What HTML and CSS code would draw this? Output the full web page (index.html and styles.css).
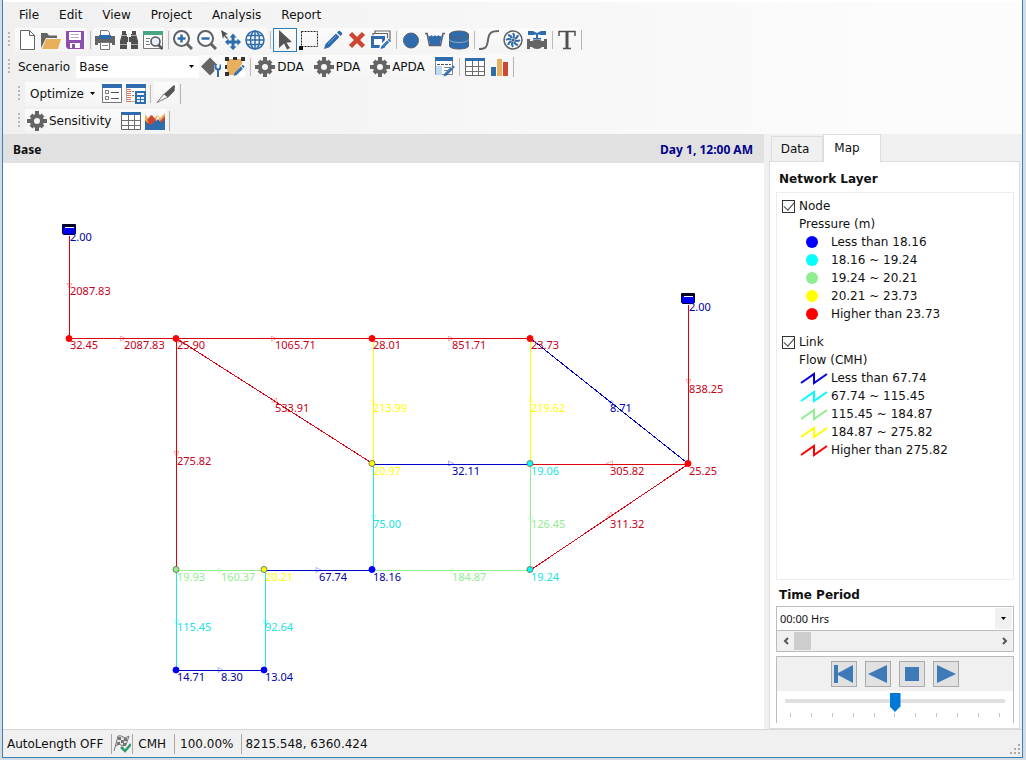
FILE: index.html
```html
<!DOCTYPE html>
<html lang="en">
<head>
<meta charset="utf-8">
<title>Network map</title>
<link rel="stylesheet" href="styles.css">
</head>
<body>
<svg class="defs" aria-hidden="true">
  <symbol id="gear" viewBox="0 0 20 20"><path d="M8 0h4v4H8zM8 16h4v4H8zM0 8h4v4H0zM16 8h4v4h-4zM2.500 5.500l3-3L8 5.500 5.500 8zM12 5.500l2.500-3 3 3L14.500 8zM2.500 14.500l3-2.500L8 14.500l-2.500 3zM12 14.500l2.500-2.500 3 2.500-3 3z" fill="#646464"/><circle cx="10" cy="10" r="5" fill="none" stroke="#646464" stroke-width="4"/></symbol>
  <symbol id="table" viewBox="0 0 20 20"><path d="M.500 1.500h19v17H.500z" fill="#fff" stroke="#646464"/><path d="M0 1h20v3H0z" fill="#2f6cad"/><path d="M1 9.500h18M1 14.500h18M7.500 4v14M13.500 4v14" stroke="#707070" fill="none"/></symbol>
  <symbol id="pencil" viewBox="0 0 20 20"><path d="M1 19l1.500-5L13 3.500 16.500 7 6 17.500zM14 2.500l1.500-1.500q1-.500 1.800.200l1.600 1.600q.700.800.200 1.700L17.500 6z" fill="#2f6cad"/><path d="M5 14l8-8" stroke="#7ba8d8" stroke-width=".8"/></symbol>
  <symbol id="zig" viewBox="0 0 28 14"><path d="M1 12 14 3v9L27 3" fill="none" stroke="currentColor" stroke-width="2"/></symbol>
</svg>
<div class="window">
  <nav class="menu">
    <button>File</button><button>Edit</button><button>View</button><button>Project</button><button>Analysis</button><button>Report</button>
  </nav>

  <div class="toolbar">
    <i class="grip"></i>
    <button class="tool" aria-label="New"><svg viewBox="0 0 20 20"><path d="M3.500.500h9l5 5v14h-14z" fill="#fff" stroke="#646464"/><path d="M12.500.500v5h5" fill="none" stroke="#646464"/></svg></button>
    <button class="tool" aria-label="Open"><svg viewBox="0 0 20 20"><path d="M0 18V3h6l2 2.500h8V8H5z" fill="#646464"/><path d="M5 9h15l-3 10H1z" fill="#e8b05c"/></svg></button>
    <button class="tool" aria-label="Save"><svg viewBox="0 0 20 20"><path d="M1 1h18v18H3l-2-2z" fill="#8c4fb0"/><path d="M4 2h12v8H4zM5 13h10v5H5z" fill="#fff"/><path d="M6 4.500h8M6 7.500h8" stroke="#c4a8d4"/><path d="M7 14h3v4H7z" fill="#8c4fb0"/></svg></button>
    <i class="sep"></i>
    <button class="tool" aria-label="Print"><svg viewBox="0 0 20 20"><path d="M0 6h20v9h-3v-2H3v2H0z" fill="#646464"/><path d="M5.500.500h7l2 2V6h-9z" fill="#fff" stroke="#777"/><path d="M4 5h12v4H4z" fill="#2f6cad"/><path d="M5.500 12.500h9v7h-9z" fill="#fff" stroke="#777"/><path d="M7 15.500h6" stroke="#888"/></svg></button>
    <button class="tool" aria-label="Find"><svg viewBox="0 0 20 20"><path d="M3 1h4v3h1v3h4V4h1V1h4v3l2 7v8h-7v-7H8v7H1v-8l2-7z" fill="#505050"/><path d="M3 5.500h5M12 5.500h5M1 14.500h7M12 14.500h7" stroke="#aaa"/><path d="M9.500 7v5" stroke="#ddd"/></svg></button>
    <button class="tool" aria-label="Preview report"><svg viewBox="0 0 20 20"><path d="M.500 1.500h19v17H.500z" fill="#fff" stroke="#777"/><path d="M0 1h20v4H0z" fill="#4aa582"/><path d="M3 8.500h4M3 11.500h3M3 14.500h4" stroke="#777"/><circle cx="12.500" cy="11.500" r="4.500" fill="#e8f0ff" stroke="#555" stroke-width="1.600"/><path d="M15.500 15l4 4" stroke="#555" stroke-width="2.500"/></svg></button>
    <i class="sep"></i>
    <button class="tool" aria-label="Zoom in"><svg viewBox="0 0 20 20"><path d="M14 14l5 5" stroke="#646464" stroke-width="3"/><circle cx="8.500" cy="8.500" r="7.500" fill="#fff" stroke="#5c6068" stroke-width="2"/><path d="M4.500 8.500h8M8.500 4.500v8" stroke="#2f6cad" stroke-width="2.500"/></svg></button>
    <button class="tool" aria-label="Zoom out"><svg viewBox="0 0 20 20"><path d="M14 14l5 5" stroke="#646464" stroke-width="3"/><circle cx="8.500" cy="8.500" r="7.500" fill="#fff" stroke="#5c6068" stroke-width="2"/><path d="M4.500 8.500h8" stroke="#2f6cad" stroke-width="2.500"/></svg></button>
    <button class="tool" aria-label="Pan"><svg viewBox="0 0 20 20"><path d="M0 0l7 4-3 1 3 3-1 1-3-3-1 3z" fill="#505050"/><path d="M12 3.500l3.500 4h-2v3h3v-2l3.500 3.500-3.500 3.500v-2h-3v3h2L12 20l-3.500-3.500h2v-3h-3v2L4 12l3.500-3.500v2h3v-3h-2z" fill="#2f6cad"/></svg></button>
    <button class="tool" aria-label="Full extent"><svg viewBox="0 0 20 20"><g fill="none" stroke="#2f6cad" stroke-width="1.500"><circle cx="10" cy="10" r="9"/><ellipse cx="10" cy="10" rx="4.500" ry="9"/><path d="M10 1v18M1 10h18M2.500 5.500h15M2.500 14.500h15"/></g></svg></button>
    <i class="sep"></i>
    <button class="tool active" aria-label="Select"><svg viewBox="0 0 20 20"><path d="M4 0l13 12-5.500.800L15 18l-3 1.500-3-6L4 18z" fill="#555"/></svg></button>
    <button class="tool" aria-label="Select region"><svg viewBox="0 0 20 20"><path d="M2.500 1.500h16v15h-16z" fill="none" stroke="#222" stroke-dasharray="2 1"/><path d="M0 16h4v4H0z" fill="#111"/></svg></button>
    <button class="tool" aria-label="Draw"><svg viewBox="0 0 20 20"><use href="#pencil"/></svg></button>
    <button class="tool" aria-label="Delete"><svg viewBox="0 0 20 20"><path d="M3.500 3.500l13 13M16.500 3.500l-13 13" stroke="#cf4630" stroke-width="4.500"/></svg></button>
    <button class="tool" aria-label="Edit group"><svg viewBox="0 0 20 20"><path d="M4 3.500V1h15v11M2 5.500V3.500h14.500v10" fill="none" stroke="#666" stroke-width="1.200"/><path d="M1.500 7.500h11v9h-11z" fill="#fff" stroke="#2f6cad" stroke-width="3"/><path d="M8 19l1-4 7-7 4 2-8 9z" fill="#fff"/><use href="#pencil" x="9" y="8" width="11" height="12"/></svg></button>
    <i class="sep"></i>
    <button class="tool" aria-label="Junction"><svg viewBox="0 0 20 20"><circle cx="10" cy="10.500" r="7.500" fill="#2f6cad" stroke="#5c6068"/></svg></button>
    <button class="tool" aria-label="Reservoir"><svg viewBox="0 0 20 20"><path d="M0 3.500h2l2.500 12h11l2.500-12h2" fill="none" stroke="#5c6068" stroke-width="1.500"/><path d="M3 5q1.700 2.500 3.500 0 1.800 2.500 3.500 0 1.800 2.500 3.500 0 1.800 2.500 3.500 0l-2.200 10H5z" fill="#2f6cad"/></svg></button>
    <button class="tool" aria-label="Tank"><svg viewBox="0 0 20 20"><path d="M.500 4v12c0 4 19 4 19 0V4z" fill="#2f6cad" stroke="#5c6068"/><ellipse cx="10" cy="4.500" rx="9.500" ry="3.500" fill="#2f6cad" stroke="#5c6068"/><path d="M0 9.500c2 4 18 4 20 0" fill="none" stroke="#9ab"/></svg></button>
    <i class="sep"></i>
    <button class="tool" aria-label="Pipe"><svg viewBox="0 0 20 20"><path d="M0 19c6 0 8-1 9-9s4-9 11-9" fill="none" stroke="#646464" stroke-width="2"/></svg></button>
    <button class="tool" aria-label="Pump"><svg viewBox="0 0 20 20"><circle cx="10" cy="10" r="9" fill="#fff" stroke="#5c6068" stroke-width="1.500"/><g fill="none" stroke="#2f6cad" stroke-width="2"><path id="blade" d="M10 8q2-2 0-5"/><use href="#blade" transform="rotate(45 10 10)"/><use href="#blade" transform="rotate(90 10 10)"/><use href="#blade" transform="rotate(135 10 10)"/><use href="#blade" transform="rotate(180 10 10)"/><use href="#blade" transform="rotate(225 10 10)"/><use href="#blade" transform="rotate(270 10 10)"/><use href="#blade" transform="rotate(315 10 10)"/></g><circle cx="10" cy="10" r="1.500" fill="#5c6068"/></svg></button>
    <button class="tool" aria-label="Valve"><svg viewBox="0 0 20 20"><path d="M1 1h5l4 2 4-2h5v4h-5l-3-.500V8h3v1.500H6V8h3V4.500L6 5H1z" fill="#2f6cad"/><path d="M0 9h3v2h2q1.500-1.500 5-1.500t5 1.500h2V9h3v10h-3v-2h-2q-1.500 2-5 2t-5-2H3v2H0z" fill="#646464"/></svg></button>
    <i class="sep"></i>
    <button class="tool" aria-label="Text"><svg viewBox="0 0 20 20"><path d="M2 6V1.500h16V6M6 18.500h8" fill="none" stroke="#505050" stroke-width="1.500"/><path d="M10 1v18" stroke="#505050" stroke-width="3"/></svg></button>
    <i class="end"></i>
  </div>

  <div class="toolbar">
    <i class="grip"></i>
    <label class="scenario-label" for="scenario">Scenario</label>
    <span class="combo scenario"><select id="scenario"><option>Base</option></select><svg viewBox="0 0 5 3"><path d="M0 0h5L2.500 3z"/></svg></span>
    <button class="tool" aria-label="Manage scenario"><svg viewBox="0 0 20 20"><path d="M0 9.500 9 0.500 18 9.500 9 18.500z" fill="#646464"/><path d="M13 8h7v12h-6z" fill="#f8f8f8"/><path d="M14.500 7.500v2q0 3 2.500 3t2.500-3v-2M17 12v8" stroke="#2f6cad" stroke-width="2" fill="none"/></svg></button>
    <button class="tool" aria-label="Edit area"><svg viewBox="0 0 20 20"><path d="M2.500 2h15l-1 8v8h-13l-2-8z" fill="#e8b05c"/><path d="M0 0h4v4H0zM8 0h4v3H8zM16 0h4v4h-4zM0 15h4v4H0zM0 8h2v4H0z" fill="#333"/><path d="M8 19l9-12 3 2v11z" fill="#fff"/><use href="#pencil" x="8" y="7" width="12" height="13"/></svg></button>
    <i class="sep"></i>
    <button class="tool labelled"><svg viewBox="0 0 20 20"><use href="#gear"/></svg>DDA</button>
    <button class="tool labelled"><svg viewBox="0 0 20 20"><use href="#gear"/></svg>PDA</button>
    <button class="tool labelled"><svg viewBox="0 0 20 20"><use href="#gear"/></svg>APDA</button>
    <button class="tool" aria-label="Edit report"><svg viewBox="0 0 20 20"><path d="M.500 1.500h17v16H.500z" fill="#fff" stroke="#888"/><path d="M0 0h18v4H0z" fill="#2f6cad"/><path d="M2 7.500h14" stroke="#555" stroke-dasharray="3 1"/><path d="M1 9h6v9H1z" fill="#bcdcf4"/><path d="M9 10.500h6M9 13.500h4" stroke="#888"/><use href="#pencil" x="8" y="8" width="12" height="12"/></svg></button>
    <i class="sep"></i>
    <button class="tool" aria-label="Table"><svg viewBox="0 0 20 20"><use href="#table"/></svg></button>
    <button class="tool" aria-label="Chart"><svg viewBox="0 0 20 20"><path d="M2 10h5v9H2z" fill="#2f6cad"/><path d="M8 2h5v17H8z" fill="#e8b05c"/><path d="M14 5h5v14h-5z" fill="#cf4630"/></svg></button>
    <i class="end"></i>
  </div>

  <div class="toolbar indented">
    <i class="grip"></i>
    <button class="tool dropdown">Optimize<svg class="arrow" viewBox="0 0 5 3"><path d="M0 0h5L2.500 3z"/></svg></button>
    <button class="tool" aria-label="Options"><svg viewBox="0 0 20 20"><path d="M.500.500h19v18H.500z" fill="#fff" stroke="#777"/><path d="M0 0h20v4H0z" fill="#2f6cad"/><path d="M3.500 6.500h3v3h-3zM3.500 12.500h3v3h-3z" fill="#fff" stroke="#777"/><path d="M9 8.500h8M9 14.500h8" stroke="#555"/></svg></button>
    <button class="tool" aria-label="Costs"><svg viewBox="0 0 20 20"><path d="M.500.500h19v17H.500z" fill="#fff" stroke="#aaa"/><path d="M0 0h20v4H0z" fill="#2f6cad"/><path d="M3 5v13" stroke="#dc7060" stroke-width="4" stroke-dasharray="1 1"/><path d="M6 7.500h2M6 11.500h2" stroke="#777"/><path d="M9 7h11v13H9z" fill="#2f6cad"/><path d="M11 9h7v2h-7zM11 13h3v2h-3zM15 13h3v2h-3zM11 16h3v2h-3zM15 16h3v2h-3z" fill="#e8f2fc"/></svg></button>
    <i class="sep"></i>
    <button class="tool" aria-label="Cut"><svg viewBox="0 0 20 20"><path d="M1 18.500 8 10l4 3z" fill="#fff" stroke="#777"/><path d="M8 10 18 1l1 1-.500 5-6.500 6.500z" fill="#555"/></svg></button>
    <i class="end"></i>
  </div>

  <div class="toolbar indented">
    <i class="grip"></i>
    <button class="tool labelled"><svg viewBox="0 0 20 20"><use href="#gear"/></svg>Sensitivity</button>
    <button class="tool" aria-label="Sensitivity table"><svg viewBox="0 0 20 20"><use href="#table"/></svg></button>
    <button class="tool" aria-label="Sensitivity chart"><svg viewBox="0 0 20 20"><path d="M0 3l5 7 8-6 2 3 5-5v14H0z" fill="#e8b05c"/><path d="M11 10 13 4l1 5z" fill="#fff"/><path d="M0 9l3 3 4-8 4 6 3 1 6-6v14H0z" fill="#cf4630"/><path d="M0 10l5 4 3-3 3-1 2-2 3 4 4-4v11H0z" fill="#2f6cad"/><path d="M2 9l4-5 5 5-5 5z" fill="#cf4630"/></svg></button>
    <i class="end"></i>
  </div>

  <main class="work">
    <section class="mapview">
      <header class="maphead"><span>Base</span><span class="clock">Day 1, 12:00 AM</span></header>
      <svg class="map" role="img" aria-label="Pipe network">
        <g transform="translate(-3 -163)">
          <g class="lines">
            <g class="red"><path d="M69.500 236V338.500H530.500M176.500 338.500V570M176.500 338.500 372.500 463.500M530.500 464.500H688.500V305M688.500 464 530.500 570"/></g>
            <g class="blue"><path d="M530.500 338.500 688.500 464M372.500 464.500H530.500M264.500 570.500H372.500M176.500 670.500H264.500"/></g>
            <g class="yellow"><path d="M373.500 338V464M530.500 338V464"/></g>
            <g class="cyan"><path d="M373.500 464V570M176.500 570V670M265.500 570V670"/></g>
            <g class="green"><path d="M530.500 464V570.500H372M176 570.500H264"/></g>
          </g>
          <g class="arrows">
            <path class="red" d="M67 283.500h5l-2.500 5zM120.500 336v5l5-2.500zM271.500 336v5l5-2.500zM448.500 336v5l5-2.500zM174 451.500h5l-2.500 5zM271.500 402l5-4 1 5zM686 379.500h5l-2.500 5zM612.500 461v5l-6-2.500zM607 517l4-5 1 5z"/>
            <path class="blue" d="M448.500 461v5l5-2.500zM316 567.500v5l5-2.500zM218 667.500v5l5-2.500zM608 401h5v5z"/>
            <path class="green" d="M218 568v5l5-2.500zM453 568v5l-5-2.500zM528 519h5l-2.500-5z"/>
            <path class="yellow" d="M371 400h5l-2.500 5zM528 401h5l-2.500-5z"/>
            <path class="cyan" d="M371 515h5l-2.500 5zM174 620h5l-2.500 5zM263 620h5l-2.500 5z"/>
          </g>
          <g class="tanks"><path d="M62.500 224.500h13v9l-1 1h-11l-1-1zM681.500 293.500h13v9l-1 1h-11l-1-1z"/><path class="rim" d="M63 225h12v2H63zM682 294h12v2h-12z"/><path class="surface" d="M65 227.500h9M684 296.500h9"/></g>
          <g class="nodes">
            <g class="red"><circle cx="69" cy="338.500" r="3"/><circle cx="176" cy="338.500" r="3"/><circle cx="372" cy="338.500" r="3"/><circle cx="530" cy="338.500" r="3"/><circle cx="688" cy="463.500" r="3"/></g>
            <g class="yellow"><circle cx="372" cy="463.500" r="3"/><circle cx="264" cy="569.500" r="3"/></g>
            <g class="cyan"><circle cx="530" cy="463.500" r="3"/><circle cx="530" cy="569.500" r="3"/></g>
            <g class="green"><circle cx="176" cy="569.500" r="3"/></g>
            <g class="blue"><circle cx="372" cy="569.500" r="3"/><circle cx="176" cy="670" r="3"/><circle cx="264" cy="670" r="3"/></g>
          </g>
          <g class="labels">
            <g class="blue"><text x="70" y="241">2.00</text><text x="689" y="311">2.00</text><text x="610" y="412">8.71</text><text x="452" y="475">32.11</text><text x="319" y="581">67.74</text><text x="373" y="581">18.16</text><text x="177" y="681">14.71</text><text x="221" y="681">8.30</text><text x="265" y="681">13.04</text></g>
            <g class="red"><text x="70" y="295">2087.83</text><text x="70" y="349">32.45</text><text x="124" y="349">2087.83</text><text x="177" y="349">25.90</text><text x="275" y="349">1065.71</text><text x="373" y="349">28.01</text><text x="452" y="349">851.71</text><text x="531" y="349">23.73</text><text x="275" y="412">533.91</text><text x="177" y="465">275.82</text><text x="689" y="393">838.25</text><text x="610" y="475">305.82</text><text x="689" y="475">25.25</text><text x="610" y="528">311.32</text></g>
            <g class="yellow"><text x="373" y="412">213.99</text><text x="531" y="412">219.62</text><text x="373" y="475">20.97</text><text x="265" y="581">20.21</text></g>
            <g class="cyan"><text x="531" y="475">19.06</text><text x="373" y="528">75.00</text><text x="531" y="581">19.24</text><text x="177" y="631">115.45</text><text x="265" y="631">92.64</text></g>
            <g class="green"><text x="531" y="528">126.45</text><text x="177" y="581">19.93</text><text x="221" y="581">160.37</text><text x="452" y="581">184.87</text></g>
          </g>
        </g>
      </svg>
    </section>

    <aside class="side">
      <div class="tabs"><button class="tab">Data</button><button class="tab current">Map</button></div>
      <div class="panel">
        <h2>Network Layer</h2>
        <div class="layers">
          <div class="layer">
            <label class="check"><input type="checkbox" checked>Node</label>
            <p>Pressure (m)</p>
            <ul>
              <li><i class="dot blue"></i>Less than 18.16</li>
              <li><i class="dot cyan"></i>18.16 ~ 19.24</li>
              <li><i class="dot green"></i>19.24 ~ 20.21</li>
              <li><i class="dot yellow"></i>20.21 ~ 23.73</li>
              <li><i class="dot red"></i>Higher than 23.73</li>
            </ul>
          </div>
          <div class="layer">
            <label class="check"><input type="checkbox" checked>Link</label>
            <p>Flow (CMH)</p>
            <ul>
              <li><svg class="zig blue"><use href="#zig"/></svg>Less than 67.74</li>
              <li><svg class="zig cyan"><use href="#zig"/></svg>67.74 ~ 115.45</li>
              <li><svg class="zig green"><use href="#zig"/></svg>115.45 ~ 184.87</li>
              <li><svg class="zig yellow"><use href="#zig"/></svg>184.87 ~ 275.82</li>
              <li><svg class="zig red"><use href="#zig"/></svg>Higher than 275.82</li>
            </ul>
          </div>
        </div>
        <h2 class="period-title"><label for="period">Time Period</label></h2>
        <span class="combo period"><select id="period"><option>00:00 Hrs</option></select><svg viewBox="0 0 5 3"><path d="M0 0h5L2.500 3z"/></svg></span>
        <div class="scroll">
          <button aria-label="Earlier"><svg viewBox="0 0 8 8"><path d="M6 1 3 4l3 3"/></svg></button>
          <i class="thumb"></i>
          <button aria-label="Later"><svg viewBox="0 0 8 8"><path d="M2 1l3 3-3 3"/></svg></button>
        </div>
        <div class="player">
          <div class="controls">
            <button aria-label="First"><svg viewBox="0 0 20 20"><path d="M0 1h4v8L19 1v18L4 11v8H0z"/></svg></button>
            <button aria-label="Back"><svg viewBox="0 0 20 20"><path d="M0 10 19 1v18z"/></svg></button>
            <button aria-label="Stop"><svg viewBox="0 0 20 20"><path d="M3 3h14v14H3z"/></svg></button>
            <button aria-label="Play"><svg viewBox="0 0 20 20"><path d="M1 1v18l19-9z"/></svg></button>
          </div>
          <input class="speed" type="range" min="0" max="10" value="5" aria-label="Speed">
          <div class="ticks"><i></i><i></i><i></i><i></i><i></i><i></i><i></i><i></i><i></i><i></i><i></i></div>
        </div>
      </div>
    </aside>
  </main>

  <footer class="status">
    <span>AutoLength OFF</span>
    <span class="flag"><svg viewBox="0 0 18 18"><path d="M1 16 5 1q3-1 5 1t6-1l-3 9q-3 2-5 0t-5 1" fill="#e4e4e4" stroke="#777"/><path d="M5 2h3v3H5zM11 3h3v3h-3zM8 5h3v3H8zM4 7h3v3H4zM10 8h3v3h-3z" fill="#777"/><path d="M8 12l4 4 6-7" fill="none" stroke="#2f9a6c" stroke-width="2.500"/></svg></span>
    <span>CMH</span>
    <span class="zoom">100.00%</span>
    <span class="coords">8215.548, 6360.424</span>
    <svg class="sizegrip" viewBox="0 0 10 10"><path d="M8 0h2v2H8zM4 4h2v2H4zM8 4h2v2H8zM0 8h2v2H0zM4 8h2v2H4zM8 8h2v2H8z"/></svg>
  </footer>
</div>
</body>
</html>
```
FILE: styles.css
```css
* { box-sizing: border-box; }
body {
  margin: 0;
  height: 100vh;
  padding: 0 3px 2px 2px;
  background: #d2dde8;
  font: 12px/18px "DejaVu Sans", Verdana, sans-serif;
  color: #111;
}
button, select, input { font: inherit; color: inherit; margin: 0; }
button { border: 0; padding: 0; background: none; }
svg { display: block; flex: none; }
h2, p, ul { margin: 0; padding: 0; }
.defs { position: absolute; width: 0; height: 0; }

.red { color: #f00; }
.blue { color: #00f; }
.cyan { color: #0ff; }
.green { color: #90ee90; }
.yellow { color: #ff0; }

.window {
  height: 100%;
  display: flex;
  flex-direction: column;
  border: solid #3d80b0;
  border-width: 0 1px 1px;
  background: linear-gradient(90deg, #f0f0f0, #fcfcfc 90%);
}

.menu {
  height: 26px;
  padding: 1px 0 0 16px;
  border-top: 2px solid #fff;
  display: flex;
  align-items: center;
  gap: 20px;
}

.toolbar {
  height: 27px;
  padding-left: 5px;
  display: flex;
  align-self: flex-start;
  align-items: center;
}
.toolbar.indented { margin-left: 10px; }
.grip {
  width: 2px;
  height: 16px;
  margin-right: 5px;
  background: repeating-linear-gradient(#b8b8b8 0 2px, transparent 2px 4px);
}
.tool {
  width: 24px;
  height: 24px;
  display: flex;
  align-items: center;
  justify-content: center;
  background: linear-gradient(#fbfbfb, #f4f4f4);
}
.tool svg { width: 20px; height: 20px; }
.tool.active { border: 1px solid #2f7db8; }
.tool.labelled { width: auto; padding: 0 8px 0 2px; gap: 2px; }
.tool.dropdown { width: auto; padding: 0 5px; gap: 6px; }
.tool .arrow { width: 5px; height: 3px; }
.sep { width: 6px; height: 18px; background: linear-gradient(#bbb, #bbb) center / 1px 100% no-repeat; }
.end { width: 3px; height: 20px; border-right: 1px solid #b4b4b4; }
.scenario-label { margin: 0 6px 0 3px; }

.combo { display: grid; align-items: center; }
.combo > * { grid-area: 1 / 1; }
.combo select {
  appearance: none;
  width: 100%;
  height: 100%;
  border: 0;
  border-radius: 0;
  padding: 0 20px 0 3px;
  background: #fff;
}
.combo svg { width: 5px; height: 3px; justify-self: end; margin-right: 5px; pointer-events: none; }
.scenario { width: 123px; height: 22px; }

.work { flex: 1; min-height: 0; display: flex; background: #f0f0f0; }
.mapview { flex: 1; min-width: 0; display: flex; flex-direction: column; }
.maphead {
  height: 29px;
  padding: 3px 11px 0 10px;
  display: flex;
  align-items: center;
  justify-content: space-between;
  background: #e1e1e1;
  font: bold 12px/18px "Noto Sans", "Open Sans", sans-serif;
}
.clock { color: #00008b; }
.map { width: 100%; flex: 1; min-height: 0; background: #fff; }

.lines path { fill: none; stroke: currentColor; shape-rendering: crispEdges; }
.lines .red { color: #e00010; }
.lines .blue { color: #0000c8; }
.lines .cyan { color: #20e8e8; }
.arrows path { fill: none; stroke: currentColor; opacity: .3; }
.nodes circle { fill: currentColor; stroke: currentColor; }
.nodes .yellow circle, .nodes .green circle, .nodes .cyan circle { stroke: #708060; }
.tanks path { fill: #0000f0; stroke: #000030; }
.tanks .rim { fill: #000020; stroke: none; }
.tanks .surface { stroke: #fff; }
.labels { font: 11px "Noto Sans", "Open Sans", sans-serif; }
.labels text { fill: currentColor; }
.labels .red { color: #c80020; }
.labels .blue { color: #0000a8; }
.labels .cyan { color: #20e4e4; }

.side { width: 258px; padding: 0 2px 0 5px; display: flex; flex-direction: column; }
.tabs { height: 27px; padding-left: 2px; display: flex; align-items: flex-end; }
.tab { height: 25px; width: 52px; padding-right: 4px; border: 1px solid #dcdcdc; border-bottom: 0; }
.tab.current {
  height: 28px;
  width: 58px;
  margin-bottom: -1px;
  padding: 0 10px 1px 0;
  background: #fff;
  z-index: 1;
}
.panel {
  flex: 1;
  min-height: 0;
  padding: 0 5px 5px 6px;
  display: flex;
  flex-direction: column;
  border: 1px solid #dcdcdc;
  background: #fff;
}
h2 { font-size: 12px; line-height: 30px; padding: 2px 0 0 3px; height: 30px; }
.period-title { height: 26px; line-height: 26px; }
.layers { flex: 1; min-height: 0; padding: 4px 5px; border: 1px solid #ececec; }
.layer + .layer { margin-top: 10px; }
.layer p { padding-left: 17px; }
.layer ul { list-style: none; }
.layer li { height: 18px; padding-left: 18px; display: flex; align-items: center; }
.check { height: 18px; display: flex; align-items: center; gap: 4px; }
.check input {
  appearance: none;
  width: 13px;
  height: 13px;
  border: 1px solid #333;
  display: grid;
  place-items: center;
}
.check input:checked::before {
  content: "";
  width: 9px;
  height: 5px;
  margin-bottom: 3px;
  border: solid #444;
  border-width: 0 0 1px 1px;
  transform: rotate(-48deg);
}
.dot { width: 12px; height: 12px; margin: 0 13px 0 6px; border-radius: 50%; background: currentColor; }
.zig { width: 28px; height: 14px; margin-right: 3px; }
.zig.blue { color: #0000e0; }

.period { height: 25px; border: 1px solid #bbb; font: 11px/16px "Noto Sans", "Open Sans", sans-serif; }
.period svg { width: 17px; height: 21px; padding: 9px 6px; margin-right: 1px; background: #f0f0f0; }
.scroll {
  height: 21px;
  display: flex;
  border: solid #bbb;
  border-width: 0 1px 1px;
  background: #f0f0f0;
}
.scroll button { width: 17px; display: grid; place-items: center; }
.scroll button:last-child { margin-left: auto; }
.scroll svg { width: 8px; height: 8px; fill: none; stroke: #555; stroke-width: 2; }
.thumb { width: 17px; margin: 1px 0; background: #cdcdcd; }
.player { margin-top: 4px; height: 67px; border: 1px solid #bbb; border-bottom: 0; }
.controls { height: 34px; display: flex; align-items: center; justify-content: center; gap: 8px; background: #f0f0f0; }
.controls button { width: 26px; height: 26px; display: grid; place-items: center; border: 1px solid #aaa; background: #e1e1e1; }
.controls svg { width: 20px; height: 20px; fill: #3e7ab8; }
.speed {
  appearance: none;
  display: block;
  width: calc(100% - 16px);
  height: 19px;
  margin: 2px 8px 0;
  background: linear-gradient(#e0e0e0, #e0e0e0) 0 6px / 100% 4px no-repeat;
}
.speed::-webkit-slider-thumb {
  appearance: none;
  width: 11px;
  height: 19px;
  background: #0078d7;
  clip-path: polygon(0 0, 100% 0, 100% 70%, 50% 100%, 0 70%);
}
.ticks { display: flex; justify-content: space-between; padding: 1px 13px 0; }
.ticks i { width: 1px; height: 4px; background: #c4c4c4; }

.status {
  height: 28px;
  border-top: 1px solid #d8d8d8;
  padding: 3px 2px 3px 4px;
  display: flex;
  align-items: center;
  background: #f0f0f0;
}
.status span { height: 20px; line-height: 20px; border-right: 1px solid #a8a8a8; padding-right: 8px; margin-right: 5px; }
.status .flag { padding: 1px 1px 0 0; margin-left: -4px; }
.flag svg { width: 18px; height: 18px; }
.status .zoom { margin-right: 3px; }
.status .coords { border: 0; }
.sizegrip { width: 10px; height: 10px; margin-left: auto; align-self: flex-end; fill: #aaa; }
```
